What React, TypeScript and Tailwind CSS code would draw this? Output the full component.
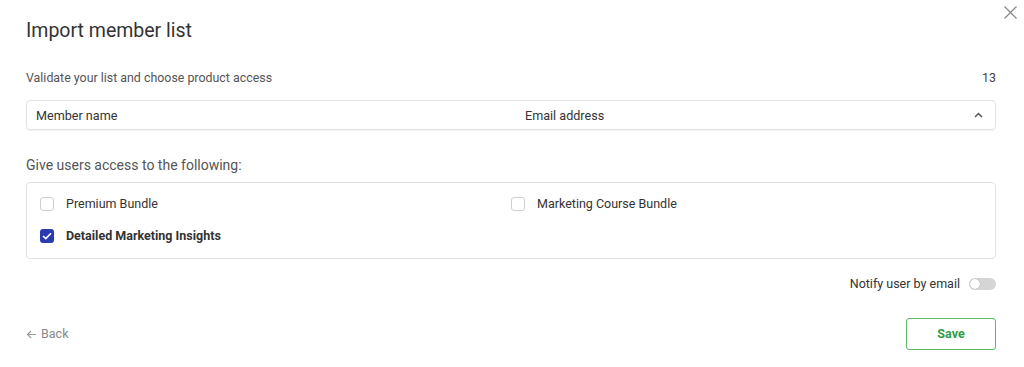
import React from "react";

export default function App() {
  return (
    <div
      className="relative w-[1024px] h-[367px] bg-white text-[#333]"
      style={{ fontFamily: "Roboto, 'Noto Sans', sans-serif" }}
    >
      <button className="absolute left-[1003px] top-[5px] w-[15px] h-[15px]">
        <svg width="15" height="15" viewBox="0 0 15 15" fill="none" stroke="#8a8a8a" strokeWidth="1.3">
          <path d="M1.5 1.5 L13.5 13.5 M13.5 1.5 L1.5 13.5" />
        </svg>
      </button>

      <div className="pl-[26px] pr-[28px] pt-[17px] flex flex-col">
        <h1 className="text-[19.5px] leading-[28px] text-[#333] font-normal">Import member list</h1>

        <div className="mt-[23px] flex justify-between items-center text-[12.4px] leading-[20px] text-[#555]">
          <span>Validate your list and choose product access</span>
          <span className="text-[#444]">13</span>
        </div>

        <div className="mt-[12px] h-[30px] flex items-center rounded-[4px] border border-[#e2e2e2] shadow-[0_1px_2px_rgba(0,0,0,0.06)] pl-[9px] pr-[12px] text-[12.6px] leading-[20px] text-[#333]">
          <span className="w-[489px] pt-[1px]">Member name</span>
          <span className="flex-1 pt-[1px]">Email address</span>
          <svg width="9" height="6" viewBox="0 0 9 6" fill="none" stroke="#555" strokeWidth="1.5">
            <path d="M1 5 L4.5 1.5 L8 5" />
          </svg>
        </div>

        <div className="mt-[25px] text-[14px] leading-[20px] text-[#555]">Give users access to the following:</div>

        <div className="mt-[7px] rounded-[4px] border border-[#e2e2e2] px-[13px] pt-[11px] pb-[12px] grid grid-cols-2 gap-y-[12px] text-[12.5px] text-[#333]">
          <label className="flex items-center gap-[12px] h-[20px]">
            <span className="w-[14px] h-[14px] rounded-[3px] border border-[#cfcfcf] bg-white" />
            <span className="pt-[1px]">Premium Bundle</span>
          </label>
          <label className="flex items-center gap-[12px] h-[20px]">
            <span className="w-[14px] h-[14px] rounded-[3px] border border-[#cfcfcf] bg-white" />
            <span className="pt-[1px]">Marketing Course Bundle</span>
          </label>
          <label className="flex items-center gap-[12px] h-[20px]">
            <span className="w-[14px] h-[14px] rounded-[3px] bg-[#2a3bb0] flex items-center justify-center">
              <svg width="10" height="8" viewBox="0 0 10 8" fill="none" stroke="white" strokeWidth="1.6">
                <path d="M1 4 L3.8 6.6 L9 1.2" />
              </svg>
            </span>
            <span className="font-bold pt-[1px]">Detailed Marketing Insights</span>
          </label>
        </div>

        <div className="mt-[15px] h-[20px] flex items-center justify-end gap-[9px] text-[12.5px] text-[#333]">
          <span className="pt-[1px]">Notify user by email</span>
          <span className="relative w-[27px] h-[12px] rounded-full bg-[#d5d5d5]">
            <span className="absolute left-[1px] top-[1px] w-[10px] h-[10px] rounded-full bg-white shadow-[0_0_1px_rgba(0,0,0,0.4)]" />
          </span>
        </div>

        <div className="mt-[24px] flex items-center justify-between">
          <button className="flex items-center gap-[4px] text-[12.5px] text-[#888] pt-[1px]">
            <svg width="11" height="9" viewBox="0 0 11 9" fill="none" stroke="#999" strokeWidth="1.1">
              <path d="M10 4.5 H1.5 M5 1 L1.5 4.5 L5 8" />
            </svg>
            <span>Back</span>
          </button>
          <button className="w-[90px] h-[32px] rounded-[3px] border border-[#5cb86a] text-[12.5px] font-bold text-[#2e9c45] bg-white">
            Save
          </button>
        </div>
      </div>
    </div>
  );
}
